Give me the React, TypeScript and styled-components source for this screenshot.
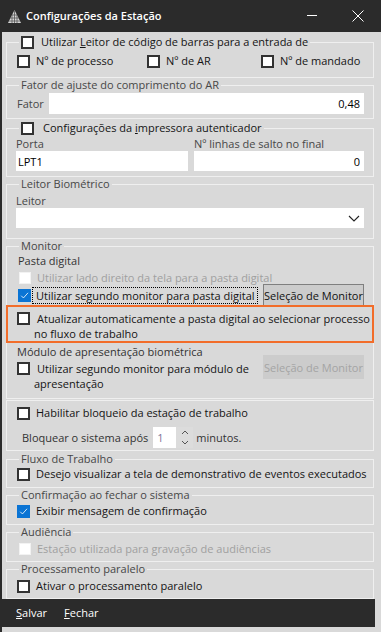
import React from "react";
import styled, { createGlobalStyle, css } from "styled-components";

const GlobalStyle = createGlobalStyle`
  html, body { margin: 0; padding: 0; }
  body {
    background: #d9d9d9;
    font-family: "Open Sans", "Noto Sans", "Liberation Sans", sans-serif;
    font-size: 11px;
    color: #141414;
  }
  *, *::before, *::after { box-sizing: border-box; }
`;

const Window = styled.div`
  width: 381px;
  height: 632px;
  display: flex;
  flex-direction: column;
  background: #2b2b2b;
  overflow: hidden;
`;

const TitleBar = styled.div`
  height: 32px;
  flex: none;
  display: flex;
  align-items: center;
  padding-left: 8px;
  color: #ffffff;
`;

const TitleText = styled.div`
  flex: 1;
  margin-left: 5px;
  font-size: 11px;
  font-weight: 600;
  line-height: 16px;
`;

const CaptionButton = styled.div`
  width: 46px;
  height: 32px;
  display: flex;
  align-items: center;
  justify-content: center;
`;

const Body = styled.div`
  flex: 1;
  margin-left: 2px;
  background: #d9d9d9;
  padding: 3px 6px 6px 4px;
  display: flex;
  flex-direction: column;
`;

const Group = styled.fieldset<{ $mt?: number }>`
  margin: ${(p) => p.$mt ?? 0}px 1px 0 0;
  padding: 0;
  border: 1px solid #efefef;
  min-width: 0;
  flex: none;
`;

const Legend = styled.legend<{ $gap?: number }>`
  margin-left: 12px;
  padding: 0 2px;
  height: 14px;
  line-height: 14px;
  color: #474747;
  display: flex;
  align-items: center;
  gap: ${(p) => p.$gap ?? 7}px;
`;

const LegendLabel = styled.span`
  color: #141414;
`;

const Content = styled.div<{ $pad: string }>`
  padding: ${(p) => p.$pad};
  display: flex;
  flex-direction: column;
`;

const CheckGrid = styled.div`
  display: grid;
  grid-template-columns: 130px 114px auto;
`;

const CheckRow = styled.label<{ $disabled?: boolean; $mt?: number; $ml?: number }>`
  display: flex;
  align-items: center;
  gap: 6px;
  height: 14px;
  flex: none;
  line-height: 14px;
  white-space: nowrap;
  margin-top: ${(p) => p.$mt ?? 0}px;
  margin-left: ${(p) => p.$ml ?? 0}px;
  color: ${(p) => (p.$disabled ? "#a0a0a0" : "#141414")};
`;

const Box = styled.span<{ $checked?: boolean; $disabled?: boolean }>`
  width: 13px;
  height: 13px;
  flex: none;
  display: inline-flex;
  align-items: center;
  justify-content: center;
  background: #ffffff;
  border: 2px solid #333333;
  ${(p) =>
    p.$checked &&
    css`
      background: #0a74d4;
      border-color: #0a74d4;
    `}
  ${(p) =>
    p.$disabled &&
    css`
      width: 12px;
      height: 12px;
      border: 1px solid #f2f2f2;
    `}
`;

const FieldRow = styled.div`
  display: flex;
  align-items: center;
`;

const FieldLabel = styled.span<{ $w?: number }>`
  color: #474747;
  height: 14px;
  line-height: 14px;
  width: ${(p) => (p.$w ? `${p.$w}px` : "auto")};
  flex: none;
`;

const TextInput = styled.input<{ $h?: number; $grow?: boolean }>`
  flex: ${(p) => (p.$grow ? "1 1 auto" : "none")};
  min-width: 0;
  width: 100%;
  height: ${(p) => p.$h ?? 20}px;
  border: none;
  outline: none;
  background: #ffffff;
  font: inherit;
  color: #000000;
  padding: 0 4px 0 2px;
  text-align: ${(p) => (p.dir === "rtl" ? "right" : "left")};
`;

const TwoCols = styled.div`
  display: grid;
  grid-template-columns: 172px 1fr;
  column-gap: 6px;
`;

const Col = styled.div`
  display: flex;
  flex-direction: column;
`;

const Select = styled.div`
  height: 20px;
  flex: none;
  background: #ffffff;
  display: flex;
  align-items: center;
  justify-content: flex-end;
  padding-right: 4px;
`;

const SubTitle = styled.div<{ $mt?: number; $ml?: number }>`
  height: 14px;
  flex: none;
  line-height: 14px;
  color: #333333;
  margin-top: ${(p) => p.$mt ?? 0}px;
  margin-left: ${(p) => p.$ml ?? 0}px;
`;

const ButtonRow = styled.div`
  display: flex;
  align-items: center;
  height: 23px;
  flex: none;
  margin-top: -1px;
  margin-left: 1px;
`;

const FocusLabel = styled.span`
  margin-left: 2px;
  padding: 0 2px 0 3px;
  outline: 1px dotted #000000;
  outline-offset: 0;
  height: 15px;
  line-height: 15px;
  white-space: nowrap;
`;

const WinButton = styled.button<{ $disabled?: boolean; $h?: number; $mt?: number }>`
  margin-left: auto;
  margin-top: ${(p) => p.$mt ?? 0}px;
  width: 101px;
  height: ${(p) => p.$h ?? 23}px;
  flex: none;
  font: inherit;
  padding: 0;
  background: #cccccc;
  border: 1px solid ${(p) => (p.$disabled ? "#cccccc" : "#7f7f7f")};
  color: ${(p) => (p.$disabled ? "#a4a4a4" : "#111111")};
  display: flex;
  align-items: center;
  justify-content: center;
`;

const Highlight = styled.div`
  margin: -2px -10px 0 -11px;
  border: 2px solid #f26d2a;
  padding: 4px 0 0 9px;
  display: flex;
  align-items: flex-start;
  gap: 4px;
  flex: none;
`;

const WrapText = styled.div<{ $disabled?: boolean }>`
  line-height: 15px;
  text-indent: 3px;
  color: ${(p) => (p.$disabled ? "#a0a0a0" : "#141414")};
`;

const TopBox = styled(Box)`
  margin-top: 1px;
`;

const ModuleArea = styled.div`
  display: flex;
  align-items: flex-start;
  gap: 4px;
  flex: none;
`;

const ModuleLeft = styled.div`
  flex: 1;
  display: flex;
  flex-direction: column;
`;

const ModuleCheck = styled.div`
  display: flex;
  align-items: flex-start;
  gap: 4px;
  margin-top: 2px;
`;

const SpinRow = styled.div`
  display: flex;
  align-items: center;
  height: 21px;
  flex: none;
  margin-top: 7px;
  margin-left: 5px;
  color: #333333;
`;

const SpinInput = styled.div`
  width: 23px;
  height: 21px;
  margin-left: 5px;
  background: #ffffff;
  color: #7d7399;
  padding-left: 4px;
  line-height: 21px;
`;

const SpinButtons = styled.div`
  width: 17px;
  height: 21px;
  display: flex;
  flex-direction: column;
  background: #dcdcdc;
`;

const SpinHalf = styled.div`
  flex: 1;
  display: flex;
  align-items: center;
  justify-content: center;
`;

const SpinSuffix = styled.span`
  margin-left: 3px;
`;

const Footer = styled.div`
  margin-top: auto;
  margin-left: -4px;
  height: 28px;
  flex: none;
  background: #2b2b2b;
  display: flex;
  align-items: center;
  gap: 17px;
  padding-left: 14px;
  color: #ffffff;
`;

const FooterAction = styled.span`
  line-height: 14px;
`;

const Check = () => (
  <svg width="11" height="11" viewBox="0 0 11 11">
    <path d="M1.5 5.8 L4.2 8.5 L9.8 2.2" fill="none" stroke="#ffffff" strokeWidth="1" />
  </svg>
);

const CheckBox = ({ checked, disabled }: { checked?: boolean; disabled?: boolean }) => (
  <Box $checked={checked} $disabled={disabled}>{checked && <Check />}</Box>
);

const AppIcon = () => (
  <svg width="13" height="13" viewBox="0 0 13 13">
    <defs>
      <clipPath id="tri">
        <polygon points="6.5,0 0,13 13,13" />
      </clipPath>
    </defs>
    <polygon points="6.5,0 0,13 13,13" fill="#d6d6d6" />
    <g clipPath="url(#tri)" stroke="#555" strokeWidth="0.8">
      <line x1="0" y1="5" x2="13" y2="5" />
      <line x1="0" y1="8" x2="13" y2="8" />
      <line x1="0" y1="11" x2="13" y2="11" />
      <line x1="4" y1="0" x2="4" y2="13" />
      <line x1="6.5" y1="0" x2="6.5" y2="13" />
      <line x1="9" y1="0" x2="9" y2="13" />
    </g>
  </svg>
);

const Minimize = () => (
  <svg width="10" height="10" viewBox="0 0 10 10">
    <line x1="0" y1="4.5" x2="10" y2="4.5" stroke="#ffffff" strokeWidth="1" />
  </svg>
);

const Close = () => (
  <svg width="12" height="12" viewBox="0 0 12 12">
    <path d="M0.5 0.5 L11.5 11.5 M11.5 0.5 L0.5 11.5" stroke="#ffffff" strokeWidth="1" />
  </svg>
);

const Chevron = () => (
  <svg width="12" height="7" viewBox="0 0 12 7">
    <path d="M1 1 L6 6 L11 1" fill="none" stroke="#222222" strokeWidth="1.1" />
  </svg>
);

const SmallChevron = ({ up }: { up?: boolean }) => (
  <svg width="8" height="5" viewBox="0 0 8 5">
    <path d={up ? "M1 4 L4 1 L7 4" : "M1 1 L4 4 L7 1"} fill="none" stroke="#555555" strokeWidth="1" />
  </svg>
);

export default function App() {
  return (
    <>
      <GlobalStyle />
      <Window>
        <TitleBar>
          <AppIcon />
          <TitleText>Configurações da Estação</TitleText>
          <CaptionButton>
            <Minimize />
          </CaptionButton>
          <CaptionButton>
            <Close />
          </CaptionButton>
        </TitleBar>

        <Body>
          <Group>
            <Legend>
              <CheckBox />
              <LegendLabel>
                Utilizar <u>L</u>eitor de código de barras para a entrada de
              </LegendLabel>
            </Legend>
            <Content $pad="5px 9px 9px 10px">
              <CheckGrid>
                <CheckRow>
                  <CheckBox />
                  Nº de processo
                </CheckRow>
                <CheckRow>
                  <CheckBox />
                  Nº de AR
                </CheckRow>
                <CheckRow>
                  <CheckBox />
                  Nº de mandado
                </CheckRow>
              </CheckGrid>
            </Content>
          </Group>

          <Group>
            <Legend>Fator de ajuste do comprimento do AR</Legend>
            <Content $pad="1px 9px 4px 10px">
              <FieldRow>
                <FieldLabel $w={32}>Fator</FieldLabel>
                <TextInput $grow $h={21} dir="rtl" readOnly value="0,48" />
              </FieldRow>
            </Content>
          </Group>

          <Group $mt={2}>
            <Legend $gap={9}>
              <CheckBox />
              <LegendLabel>
                Configurações da <u>i</u>mpressora autenticador
              </LegendLabel>
            </Legend>
            <Content $pad="2px 9px 5px 9px">
              <TwoCols>
                <Col>
                  <FieldLabel>Porta</FieldLabel>
                  <TextInput readOnly value="LPT1" />
                </Col>
                <Col>
                  <FieldLabel>Nº linhas de salto no final</FieldLabel>
                  <TextInput dir="rtl" readOnly value="0" />
                </Col>
              </TwoCols>
            </Content>
          </Group>

          <Group>
            <Legend>Leitor Biométrico</Legend>
            <Content $pad="3px 9px 10px 9px">
              <FieldLabel>Leitor</FieldLabel>
              <Select>
                <Chevron />
              </Select>
            </Content>
          </Group>

          <Group>
            <Legend>Monitor</Legend>
            <Content $pad="1px 9px 7px 10px">
              <SubTitle $ml={1}>Pasta digital</SubTitle>
              <CheckRow $disabled $mt={3} $ml={2}>
                <CheckBox disabled />
                Utilizar lado direito da tela para a pasta digital
              </CheckRow>
              <ButtonRow>
                <CheckBox checked />
                <FocusLabel>Utilizar segundo monitor para pasta digital</FocusLabel>
                <WinButton>Seleção de Monitor</WinButton>
              </ButtonRow>
              <Highlight>
                <TopBox />
                <WrapText>Atualizar automaticamente a pasta digital ao selecionar processo no fluxo de trabalho</WrapText>
              </Highlight>
              <ModuleArea>
                <ModuleLeft>
                  <SubTitle $mt={2}>Módulo de apresentação biométrica</SubTitle>
                  <ModuleCheck>
                    <TopBox />
                    <WrapText>Utilizar segundo monitor para módulo de apresentação</WrapText>
                  </ModuleCheck>
                </ModuleLeft>
                <WinButton $disabled $h={24} $mt={12}>
                  Seleção de Monitor
                </WinButton>
              </ModuleArea>
            </Content>
          </Group>

          <Group $mt={1}>
            <Content $pad="5px 9px 2px 10px">
              <CheckRow>
                <CheckBox />
                Habilitar bloqueio da estação de trabalho
              </CheckRow>
              <SpinRow>
                Bloquear o sistema após
                <SpinInput>1</SpinInput>
                <SpinButtons>
                  <SpinHalf>
                    <SmallChevron up />
                  </SpinHalf>
                  <SpinHalf>
                    <SmallChevron />
                  </SpinHalf>
                </SpinButtons>
                <SpinSuffix>minutos.</SpinSuffix>
              </SpinRow>
            </Content>
          </Group>

          <Group $mt={1}>
            <Legend>Fluxo de Trabalho</Legend>
            <Content $pad="1px 9px 6px 10px">
              <CheckRow>
                <CheckBox />
                Desejo visualizar a tela de demonstrativo de eventos executados
              </CheckRow>
            </Content>
          </Group>

          <Group>
            <Legend>Confirmação ao fechar o sistema</Legend>
            <Content $pad="2px 9px 6px 10px">
              <CheckRow>
                <CheckBox checked />
                Exibir mensagem de confirmação
              </CheckRow>
            </Content>
          </Group>

          <Group>
            <Legend>Audiência</Legend>
            <Content $pad="3px 9px 5px 10px">
              <CheckRow $disabled $ml={2}>
                <CheckBox disabled />
                Estação utilizada para gravação de audiências
              </CheckRow>
            </Content>
          </Group>

          <Group>
            <Legend>Processamento paralelo</Legend>
            <Content $pad="3px 9px 5px 10px">
              <CheckRow>
                <CheckBox />
                Ativar o processamento paralelo
              </CheckRow>
            </Content>
          </Group>

          <Footer>
            <FooterAction>
              <u>S</u>alvar
            </FooterAction>
            <FooterAction>
              <u>F</u>echar
            </FooterAction>
          </Footer>
        </Body>
      </Window>
    </>
  );
}
